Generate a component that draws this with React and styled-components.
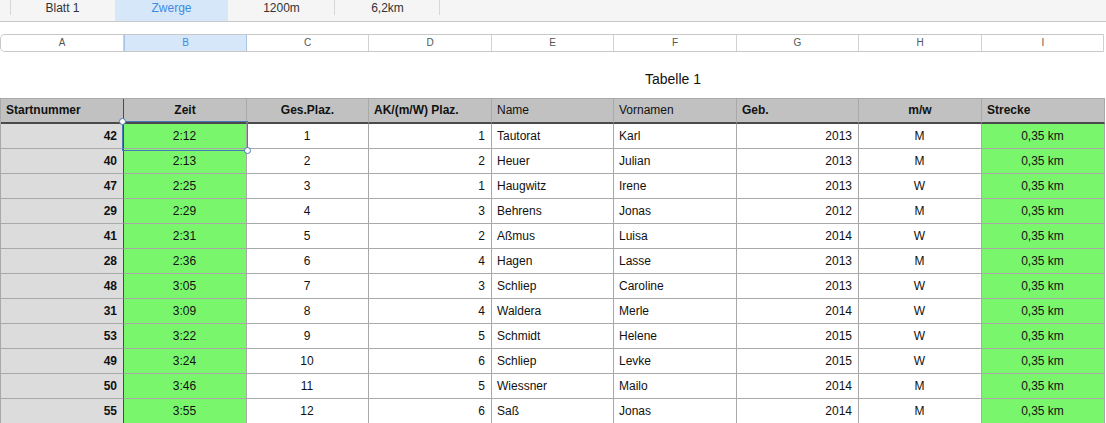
import styled, { createGlobalStyle } from "styled-components";

const GlobalStyle = createGlobalStyle`
  html, body {
    margin: 0;
    padding: 0;
    background: #ffffff;
    overflow: hidden;
  }
  body {
    font-family: "Liberation Sans", Arial, Helvetica, sans-serif;
    color: #111111;
  }
  * { box-sizing: border-box; }
`;

const COLS = "123px 123px 122px 123px 122px 123px 122px 123px 123px";
const GREEN = "#7af66d";

const sheets = ["Blatt 1", "Zwerge", "1200m", "6,2km"];
const tabWidths = [105, 113, 107, 105];
const letters = ["A", "B", "C", "D", "E", "F", "G", "H", "I"];

const headers = [
  { text: "Startnummer", align: "left", bold: true },
  { text: "Zeit", align: "center", bold: true },
  { text: "Ges.Plaz.", align: "center", bold: true },
  { text: "AK/(m/W) Plaz.", align: "left", bold: true },
  { text: "Name", align: "left" },
  { text: "Vornamen", align: "left" },
  { text: "Geb.", align: "left", bold: true },
  { text: "m/w", align: "center", bold: true },
  { text: "Strecke", align: "left", bold: true },
];

const rows = [
  ["42", "2:12", "1", "1", "Tautorat", "Karl", "2013", "M"],
  ["40", "2:13", "2", "2", "Heuer", "Julian", "2013", "M"],
  ["47", "2:25", "3", "1", "Haugwitz", "Irene", "2013", "W"],
  ["29", "2:29", "4", "3", "Behrens", "Jonas", "2012", "M"],
  ["41", "2:31", "5", "2", "Aßmus", "Luisa", "2014", "W"],
  ["28", "2:36", "6", "4", "Hagen", "Lasse", "2013", "M"],
  ["48", "3:05", "7", "3", "Schliep", "Caroline", "2013", "W"],
  ["31", "3:09", "8", "4", "Waldera", "Merle", "2014", "W"],
  ["53", "3:22", "9", "5", "Schmidt", "Helene", "2015", "W"],
  ["49", "3:24", "10", "6", "Schliep", "Levke", "2015", "W"],
  ["50", "3:46", "11", "5", "Wiessner", "Mailo", "2014", "M"],
  ["55", "3:55", "12", "6", "Saß", "Jonas", "2014", "M"],
];

const Page = styled.div`
  width: 1106px;
  height: 423px;
  overflow: hidden;
`;

const TabBar = styled.div`
  display: flex;
  height: 22px;
  padding-left: 10px;
  background: #f5f5f5;
  border-bottom: 1px solid #c9c9c9;
`;

const Tab = styled.div`
  position: relative;
  width: ${(p) => p.$w}px;
  height: 21px;
  font-size: 12px;
  line-height: 17px;
  text-align: center;
  color: ${(p) => (p.$active ? "#3d8ae6" : "#333333")};
  background: ${(p) => (p.$active ? "#d6e7f9" : "transparent")};
  &::after {
    content: "";
    position: absolute;
    right: 0;
    top: 0;
    height: 15px;
    border-right: 1px solid #d7d7d7;
    display: ${(p) => (p.$sep ? "block" : "none")};
  }
  &::before {
    content: "";
    position: absolute;
    left: 0;
    top: 0;
    height: 15px;
    border-left: 1px solid #d7d7d7;
    display: ${(p) => (p.$first ? "block" : "none")};
  }
`;

const ColumnBar = styled.div`
  display: grid;
  grid-template-columns: ${COLS};
  width: 1104px;
  height: 18px;
  margin-top: 12px;
  border: 1px solid #c8c8c8;
  border-right-color: #d0d0d0;
  border-radius: 5px 0 0 5px;
  overflow: hidden;
`;

const ColumnLetter = styled.div`
  font-size: 10px;
  line-height: 16px;
  text-align: center;
  color: ${(p) => (p.$active ? "#3d8ae6" : "#555555")};
  background: ${(p) => (p.$active ? "#d6e7f9" : "#ffffff")};
  border-right: 1px solid ${(p) => (p.$active ? "#a9c4e2" : "#d2d2d2")};
  border-left: ${(p) => (p.$active ? "1px solid #a9c4e2" : "none")};
`;

const Title = styled.div`
  height: 46px;
  padding: 19px 0 0 645px;
  font-size: 14px;
  line-height: 16px;
  color: #111111;
`;

const TableWrap = styled.div`
  position: relative;
  width: 1105px;
  border-top: 1px solid #a9a9a9;
  border-left: 1px solid #a9a9a9;
`;

const Row = styled.div`
  display: grid;
  grid-template-columns: ${COLS};
  height: 25px;
`;

const HeadCell = styled.div`
  background: #c0c1c0;
  border-right: 1px solid ${(p) => (p.$first ? "#4a4a4a" : "#a9a9a9")};
  border-bottom: 2px solid #4a4a4a;
  padding: 0 5px;
  font-size: 12px;
  line-height: 23px;
  font-weight: ${(p) => (p.$bold ? 700 : 400)};
  text-align: ${(p) => p.$align};
  white-space: nowrap;
`;

const Cell = styled.div`
  background: ${(p) => p.$bg || "#ffffff"};
  border-right: 1px solid ${(p) => (p.$first ? "#4a4a4a" : "#a9a9a9")};
  border-bottom: 1px solid #a9a9a9;
  padding: 0 6px 0 5px;
  font-size: 12px;
  line-height: 24px;
  font-weight: ${(p) => (p.$bold ? 700 : 400)};
  text-align: ${(p) => p.$align};
  white-space: nowrap;
`;

const Selection = styled.div`
  position: absolute;
  left: 121px;
  top: 22px;
  width: 126px;
  height: 30px;
  border: 1px solid #4a78b8;
  pointer-events: none;
`;

const Handle = styled.span`
  position: absolute;
  width: 7px;
  height: 7px;
  border-radius: 50%;
  background: #ffffff;
  border: 1px solid #4a78b8;
  ${(p) => (p.$end ? "right: -4px; bottom: -4px;" : "left: -4px; top: -4px;")}
`;

const bodyCols = [
  { align: "right", bold: true, bg: "#dcdcdc" },
  { align: "center", bg: GREEN },
  { align: "center" },
  { align: "right" },
  { align: "left" },
  { align: "left" },
  { align: "right" },
  { align: "center" },
  { align: "center", bg: GREEN },
];

export default function App() {
  return (
    <Page>
      <GlobalStyle />
      <TabBar>
        {sheets.map((s, i) => (
          <Tab
            key={s}
            $w={tabWidths[i]}
            $active={i === 1}
            $first={i === 0}
            $sep={i === 3 || i === 2}
          >
            {s}
          </Tab>
        ))}
      </TabBar>
      <ColumnBar>
        {letters.map((l, i) => (
          <ColumnLetter key={l} $active={i === 1}>
            {l}
          </ColumnLetter>
        ))}
      </ColumnBar>
      <Title>Tabelle 1</Title>
      <TableWrap>
        <Row>
          {headers.map((h, i) => (
            <HeadCell key={h.text} $first={i === 0} $bold={h.bold} $align={h.align}>
              {h.text}
            </HeadCell>
          ))}
        </Row>
        {rows.map((r) => (
          <Row key={r[0]}>
            {[...r, "0,35 km"].map((v, i) => (
              <Cell
                key={i}
                $first={i === 0}
                $bold={bodyCols[i].bold}
                $align={bodyCols[i].align}
                $bg={bodyCols[i].bg}
              >
                {v}
              </Cell>
            ))}
          </Row>
        ))}
        <Selection>
          <Handle />
          <Handle $end />
        </Selection>
      </TableWrap>
    </Page>
  );
}
